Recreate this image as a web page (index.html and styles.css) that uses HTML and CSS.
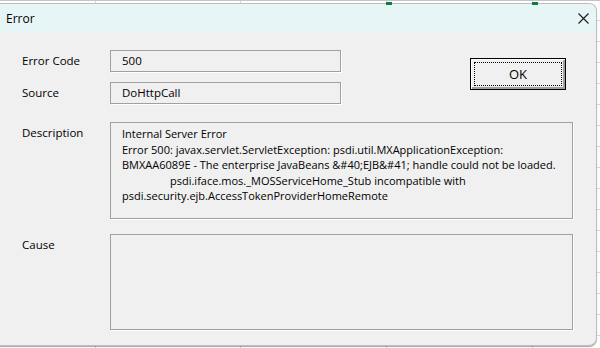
FILE: index.html
```html
<!DOCTYPE html>
<html lang="en">

<head>
    <meta charset="UTF-8">
    <title>Error</title>
    <link rel="stylesheet" href="styles.css">
</head>

<body>
    <div class="sheet-top">
        <span class="cell-mark mark1"></span>
        <span class="cell-mark mark2"></span>
    </div>
    <div class="dialog">
        <div class="titlebar">
            <span class="title">Error</span>
            <span class="close">
                <svg width="11" height="11" viewBox="0 0 11 11">
                    <path d="M0.5 0.5 L10.5 10.5 M10.5 0.5 L0.5 10.5" stroke="#1a1a1a" stroke-width="1.1" fill="none" />
                </svg>
            </span>
        </div>
        <div class="content">
            <div class="label row1">Error Code</div>
            <div class="field short row1">500</div>
            <button class="ok-btn"><span class="focus">OK</span></button>

            <div class="label row2">Source</div>
            <div class="field short row2">DoHttpCall</div>

            <div class="label desc-label">Description</div>
            <div class="field area desc">Internal Server Error<br>Error 500: javax.servlet.ServletException: psdi.util.MXApplicationException:<br>BMXAA6089E - The enterprise JavaBeans &amp;#40;EJB&amp;#41; handle could not be loaded.<br><span class="tab"></span>psdi.iface.mos._MOSServiceHome_Stub incompatible with<br>psdi.security.ejb.AccessTokenProviderHomeRemote</div>

            <div class="label cause-label">Cause</div>
            <div class="field area cause"></div>
        </div>
    </div>
</body>

</html>
```

FILE: styles.css
```css
body {
    margin: 0;
    font-family: 'Open Sans', 'Noto Sans', sans-serif;
    font-size: 11px;
    color: #000;
    background-color: #ffffff;
    background-image:
        linear-gradient(to right, transparent 95px, #d6d6d6 95px, #d6d6d6 96px, transparent 96px,
            transparent 240px, #d6d6d6 240px, #d6d6d6 241px, transparent 241px,
            transparent 386px, #d6d6d6 386px, #d6d6d6 387px, transparent 387px,
            transparent 532px, #d6d6d6 532px, #d6d6d6 533px, transparent 533px),
        repeating-linear-gradient(to bottom, transparent 0, transparent 20px, #d6d6d6 20px, #d6d6d6 21px);
    width: 600px;
    height: 348px;
    overflow: hidden;
}

.sheet-top {
    position: relative;
    height: 3px;
    border-top: 1px solid #c4c4c4;
    box-sizing: border-box;
}

.cell-mark {
    position: absolute;
    top: 1px;
    width: 6px;
    height: 3px;
    background: #107c41;
}

.mark1 {
    left: 386px;
}

.mark2 {
    left: 532px;
}

.dialog {
    width: 597px;
    height: 343px;
    box-sizing: border-box;
    border: 1px solid #bdbdbd;
    border-left: none;
    border-radius: 0 8px 8px 0;
    background: #f0f0f0;
    overflow: hidden;
    box-shadow: 0 1px 1px rgba(0, 0, 0, 0.35);
}

.titlebar {
    height: 29px;
    background: #e8f5f7;
    display: flex;
    align-items: center;
    justify-content: space-between;
    padding: 0 7px 0 6px;
}

.title {
    font-size: 12px;
    padding-bottom: 1px;
}

.close {
    display: flex;
}

.content {
    display: grid;
    grid-template-columns: 88px 231px 129px 96px 7px;
    padding: 17px 0 0 22px;
    align-items: start;
}

.label {
    grid-column: 1;
    line-height: 16px;
    font-size: 11.5px;
}

.field {
    box-sizing: border-box;
    border: 1px solid #a0a0a0;
    box-shadow: 1px 1px 0 #ffffff;
    padding-left: 11px;
    line-height: 16px;
    white-space: nowrap;
}

.short {
    grid-column: 2;
    height: 22px;
    padding-top: 2px;
    font-size: 11.5px;
}

.row1 {
    grid-row: 1;
}

.row2 {
    grid-row: 2;
    margin-top: 10px;
}

.row1.label,
.row2.label {
    align-self: center;
}

.row2.label {
    margin-top: 10px;
}

.area {
    grid-column: 2 / 6;
}

.desc-label,
.desc {
    grid-row: 3;
    margin-top: 18px;
}

.desc-label {
    padding-top: 3px;
}

.desc {
    height: 97px;
    padding-top: 3px;
    line-height: 15.5px;
}

.tab {
    display: inline-block;
    width: 48px;
}

.cause-label,
.cause {
    grid-row: 4;
    margin-top: 15px;
}

.cause-label {
    padding-top: 3px;
}

.cause {
    height: 96px;
}

.ok-btn {
    grid-column: 4;
    grid-row: 1 / 3;
    margin: 8px 0 0 0;
    width: 96px;
    height: 32px;
    box-sizing: border-box;
    border: 1px solid #000;
    background: #f0f0f0;
    box-shadow: inset 1px 1px 0 #ffffff, inset -2px -2px 0 #a0a0a0;
    padding: 3px;
    font-family: inherit;
    font-size: 13px;
    color: #000;
}

.focus {
    display: flex;
    align-items: center;
    justify-content: center;
    height: 100%;
    border: 1px dotted #000;
    box-sizing: border-box;
}
```
